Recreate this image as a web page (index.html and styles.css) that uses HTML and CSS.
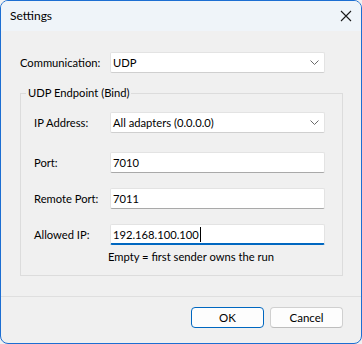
FILE: index.html
```html
<!DOCTYPE html>
<html>
<head>
<meta charset="utf-8">
<link rel="stylesheet" href="styles.css">
</head>
<body>
<div class="window">
  <div class="titlebar">
    <span class="title">Settings</span>
    <svg class="close" width="12" height="12" viewBox="0 0 12 12"><path d="M1 1 L11 11 M11 1 L1 11" stroke="#1a1a1a" stroke-width="1.1" fill="none"/></svg>
  </div>
  <div class="content">
    <div class="row top">
      <span class="lbl wide">Communication:</span>
      <div class="field combo"><span class="val">UDP</span><svg class="chev" width="9" height="5" viewBox="0 0 9 5"><path d="M0.5 0.5 L4.5 4.5 L8.5 0.5" stroke="#6a6a6a" stroke-width="1" fill="none"/></svg></div>
    </div>
    <fieldset class="group">
      <legend>UDP Endpoint (Bind)</legend>
      <div class="row first">
        <span class="lbl">IP Address:</span>
        <div class="field combo"><span class="val">All adapters (0.0.0.0)</span><svg class="chev" width="9" height="5" viewBox="0 0 9 5"><path d="M0.5 0.5 L4.5 4.5 L8.5 0.5" stroke="#6a6a6a" stroke-width="1" fill="none"/></svg></div>
      </div>
      <div class="row">
        <span class="lbl">Port:</span>
        <div class="field"><span class="val">7010</span></div>
      </div>
      <div class="row">
        <span class="lbl">Remote Port:</span>
        <div class="field"><span class="val">7011</span></div>
      </div>
      <div class="row">
        <span class="lbl">Allowed IP:</span>
        <div class="field focus"><span class="val">192.168.100.100</span><span class="caret"></span></div>
      </div>
      <div class="hint">Empty = first sender owns the run</div>
    </fieldset>
  </div>
  <div class="footer">
    <button class="btn primary">OK</button>
    <button class="btn">Cancel</button>
  </div>
</div>
</body>
</html>
```
FILE: styles.css
```css
html, body {
  margin: 0;
  padding: 0;
  background: #f0f0f0;
}
body {
  font-family: "Lato", "Noto Sans", sans-serif;
  font-size: 11.2px;
  color: #000;
}
.window {
  box-sizing: border-box;
  width: 362px;
  height: 344px;
  border: 1px solid #1c6ed2;
  border-radius: 8px;
  background: #f0f0f0;
  overflow: hidden;
  display: flex;
  flex-direction: column;
}
.titlebar {
  height: 30px;
  background: #eff4f9;
  display: flex;
  align-items: center;
  justify-content: space-between;
  padding: 0 9px 0 9px;
  flex: none;
}
.title {
  font-size: 12px;
  line-height: 16px;
}
.close {
  display: block;
}
.content {
  padding: 21px 18px 0 19px;
}
.row {
  display: flex;
  align-items: center;
  height: 21px;
}
.lbl {
  width: 76px;
  flex: none;
  line-height: 16px;
  white-space: nowrap;
}
.lbl.wide {
  width: 90px;
}
.field {
  box-sizing: border-box;
  width: 215px;
  height: 21px;
  background: #fff;
  border: 1px solid #e3e3e3;
  border-bottom-color: #a9a9a9;
  border-radius: 2px;
  display: flex;
  align-items: center;
  padding: 0 5px 0 2px;
}
.combo {
  justify-content: space-between;
  border-bottom-color: #cfcfcf;
}
.val {
  line-height: 16px;
  white-space: nowrap;
}
.chev {
  display: block;
}
.focus {
  border-bottom: 2px solid #0067c0;
  padding-top: 1px;
}
.caret {
  display: block;
  width: 1px;
  height: 15px;
  background: #000;
  margin-left: 1px;
}
.group {
  margin: 12px 0 0 0;
  padding: 11px 16px 10px 13px;
  border: 1px solid #dcdcdc;
  min-width: 0;
}
.group legend {
  margin-left: -8px;
  padding: 0 2px;
  line-height: 16px;
}
.group .row {
  margin-top: 15px;
}
.group .row.first {
  margin-top: 0;
}
.group .row:nth-of-type(2) {
  margin-top: 19px;
}
.hint {
  margin: 4px 0 0 74px;
  line-height: 16px;
}
.footer {
  margin-top: auto;
  border-top: 1px solid #dfdfdf;
  display: flex;
  justify-content: flex-end;
  gap: 6px;
  padding: 10px 18px 15px 0;
}
.btn {
  box-sizing: border-box;
  width: 73px;
  height: 21px;
  font-family: inherit;
  font-size: 11.5px;
  color: #000;
  background: #fdfdfd;
  border: 1px solid #d0d0d0;
  border-bottom-color: #bdbdbd;
  border-radius: 4px;
  padding: 0;
  margin: 0;
}
.btn.primary {
  border: 1px solid #0067c0;
}
```
